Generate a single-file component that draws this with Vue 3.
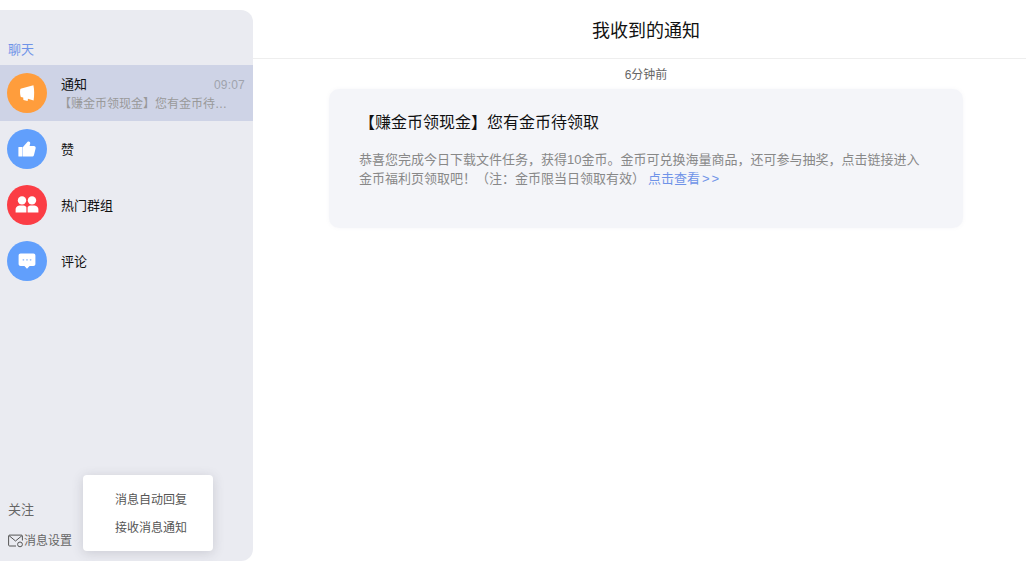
<template>
  <div class="page">
    <!-- 左侧会话列表 -->
    <aside class="sidebar">
      <div class="group-title">聊天</div>
      <ul class="session-list">
        <li
          v-for="item in sessions"
          :key="item.name"
          class="session"
          :class="{ 'session--active': item.active }"
        >
          <span class="avatar" :class="'avatar--' + item.color">
            <svg v-if="item.icon === 'notice'" viewBox="0 0 20 20" class="avatar-icon">
              <path d="M3.2 6.6 C3.4 6 3.8 5.8 4.4 5.6 L16.4 2.2 C17.4 6.4 17.4 12.6 16.6 17.4 L11 15.8 L10.6 18 L6.4 17 L6.2 14.6 L3.8 14 C3 11.6 2.9 9 3.2 6.6 Z" />
            </svg>
            <svg v-else-if="item.icon === 'like'" viewBox="0 0 20 20" class="avatar-icon">
              <rect x="1.4" y="8" width="4.2" height="9.6" rx="0.6" />
              <path d="M6 8 L10.6 2.8 C11.8 1.8 13.6 2.8 13.2 4.6 L12.6 7 L16.8 7 C18.2 7 19 8.2 18.6 9.6 L17 16 C16.7 17 16 17.6 15 17.6 L6 17.6 Z" />
            </svg>
            <svg v-else-if="item.icon === 'group'" viewBox="0 0 24 20" class="avatar-icon avatar-icon--wide">
              <circle cx="7" cy="5.4" r="4.2" />
              <circle cx="17" cy="5.4" r="4.2" />
              <path d="M0.6 17.6 V14.4 C0.6 11.8 3 10.4 5.4 10.4 H8.6 C10 10.4 11.2 11.4 11.4 12.6 V17.6 Z" />
              <path d="M12.6 17.6 V12.6 C12.8 11.4 14 10.4 15.4 10.4 H18.6 C21 10.4 23.4 11.8 23.4 14.4 V17.6 Z" />
            </svg>
            <svg v-else viewBox="0 0 20 20" class="avatar-icon">
              <path d="M3.6 2.6 H16.4 C17.6 2.6 18.4 3.4 18.4 4.6 V13 C18.4 14.2 17.6 15 16.4 15 H12.6 L10 17.8 L7.4 15 H3.6 C2.4 15 1.6 14.2 1.6 13 V4.6 C1.6 3.4 2.4 2.6 3.6 2.6 Z" />
              <circle cx="6.4" cy="8.8" r="0.9" class="dot" />
              <circle cx="10" cy="8.8" r="0.9" class="dot" />
              <circle cx="13.6" cy="8.8" r="0.9" class="dot" />
            </svg>
          </span>
          <div class="session-body">
            <div class="session-top">
              <span class="session-name">{{ item.name }}</span>
              <span v-if="item.time" class="session-time">{{ item.time }}</span>
            </div>
            <div v-if="item.desc" class="session-desc">{{ item.desc }}</div>
          </div>
        </li>
      </ul>

      <div class="sidebar-foot">
        <div class="follow">关注</div>
        <div class="setting">
          <svg viewBox="0 0 16 14" class="setting-icon">
            <path d="M8 12 H1.5 C1 12 .6 11.6 .6 11 V2 C.6 1.5 1 1.1 1.5 1.1 H13.5 C14 1.1 14.4 1.5 14.4 2 V6.5" />
            <path d="M1 1.6 L7.5 7 L14 1.6" />
            <circle cx="12" cy="10.4" r="2.4" />
          </svg>
          <span>消息设置</span>
        </div>
      </div>

      <!-- 消息设置弹出菜单 -->
      <div class="popup">
        <div class="popup-item">消息自动回复</div>
        <div class="popup-item">接收消息通知</div>
      </div>
    </aside>

    <!-- 右侧通知内容 -->
    <main class="content">
      <header class="content-head">我收到的通知</header>
      <div class="msg-time">6分钟前</div>
      <section class="card">
        <h3 class="card-title">【赚金币领现金】您有金币待领取</h3>
        <p class="card-text">
          恭喜您完成今日下载文件任务，获得10金币。金币可兑换海量商品，还可参与抽奖，点击链接进入金币福利页领取吧！（注：金币限当日领取有效）<a class="card-link">点击查看<span class="card-arrow">&gt;&gt;</span></a>
        </p>
      </section>
    </main>
  </div>
</template>

<script setup>
const sessions = [
  {
    name: '通知',
    time: '09:07',
    desc: '【赚金币领现金】您有金币待领取',
    icon: 'notice',
    color: 'orange',
    active: true
  },
  { name: '赞', icon: 'like', color: 'blue' },
  { name: '热门群组', icon: 'group', color: 'red' },
  { name: '评论', icon: 'comment', color: 'blue' }
]
</script>

<style scoped>
.page {
  display: flex;
  width: 1026px;
  height: 561px;
  overflow: hidden;
  background: #fff;
  font-family: "Liberation Sans", "Noto Sans CJK SC", sans-serif;
}

.sidebar {
  position: relative;
  display: flex;
  flex-direction: column;
  flex: none;
  width: 253px;
  height: 551px;
  margin-top: 10px;
  background: #eaebf1;
  border-radius: 0 12px 12px 0;
}

.group-title {
  margin: 31px 0 6px 8px;
  font-size: 13px;
  line-height: 18px;
  color: #6f93e8;
}

.session-list {
  margin: 0;
  padding: 0;
  list-style: none;
}

.session {
  display: flex;
  align-items: center;
  height: 56px;
  padding: 0 8px 0 7px;
  box-sizing: border-box;
}

.session--active {
  background: #ced3e6;
}

.avatar {
  display: flex;
  align-items: center;
  justify-content: center;
  flex: none;
  width: 40px;
  height: 40px;
  margin-right: 14px;
  border-radius: 50%;
}

.avatar--orange {
  background: #ff9d3c;
}

.avatar--blue {
  background: #619ffc;
}

.avatar--red {
  background: #fb3d45;
}

.avatar-icon {
  width: 20px;
  height: 20px;
  fill: #fff;
}

.avatar-icon--wide {
  width: 24px;
}

.dot {
  fill: #9dc2fb;
}

.session-body {
  flex: 1;
  min-width: 0;
  padding-top: 2px;
}

.session-top {
  display: flex;
  justify-content: space-between;
  align-items: center;
  line-height: 18px;
}

.session-name {
  font-size: 13px;
  color: #111;
}

.session-time {
  font-size: 12px;
  letter-spacing: 0.2px;
  color: #a0a3ad;
}

.session-desc {
  width: 171px;
  overflow: hidden;
  margin: 1px 0 -1px -2px;
  font-size: 12px;
  line-height: 19px;
  color: #999;
  white-space: nowrap;
  text-overflow: ellipsis;
}

.sidebar-foot {
  margin-top: auto;
  padding: 0 0 11px 8px;
  color: #666;
}

.follow {
  font-size: 13px;
  line-height: 18px;
  margin-bottom: 13px;
}

.setting {
  display: flex;
  align-items: center;
  font-size: 12px;
  line-height: 18px;
}

.setting-icon {
  flex: none;
  width: 16px;
  height: 14px;
  fill: none;
  stroke: #555;
  stroke-width: 1;
}

.popup {
  position: absolute;
  left: 83px;
  top: 465px;
  width: 130px;
  height: 76px;
  padding: 11px 0 0 6px;
  box-sizing: border-box;
  background: #fff;
  border-radius: 4px;
  box-shadow: 0 2px 12px rgba(60, 60, 80, 0.18);
}

.popup-item {
  height: 28px;
  font-size: 12px;
  line-height: 28px;
  color: #555;
  text-align: center;
}

.content {
  flex: 1;
  min-width: 0;
  padding-left: 13px;
}

.content-head {
  height: 58px;
  margin-left: -13px;
  border-bottom: 1px solid #eee;
  padding-left: 13px;
  font-size: 18px;
  line-height: 63px;
  color: #111;
  text-align: center;
}

.msg-time {
  height: 30px;
  font-size: 12px;
  line-height: 33px;
  color: #666;
  text-align: center;
}

.card {
  width: 634px;
  height: 139px;
  margin: 0 auto;
  padding: 23px 36px 0 30px;
  box-sizing: border-box;
  background: #f4f5f9;
  border-radius: 10px;
  box-shadow: 0 0 4px rgba(120, 125, 150, 0.06);
}

.card-title {
  margin: 0 0 16px;
  font-size: 16px;
  font-weight: 400;
  line-height: 22px;
  color: #111;
}

.card-text {
  margin: 0;
  font-size: 13px;
  line-height: 19px;
  color: #888;
}

.card-link {
  margin-left: 3px;
  color: #6f93e8;
}

.card-arrow {
  margin-left: 2px;
  letter-spacing: 2px;
}
</style>
